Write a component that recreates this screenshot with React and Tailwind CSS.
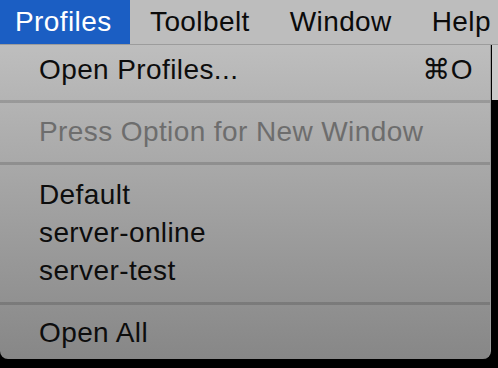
const MENUS = ['Toolbelt', 'Window', 'Help']

function Item({ label, shortcut, disabled }) {
  return (
    <div className={`flex items-center h-[38px] leading-[38px] pl-[39px] pr-[17px] ${disabled ? 'text-[#6d6d6d]' : 'text-[#0d0d0d]'}`}>
      <span>{label}</span>
      {shortcut && <span className="ml-auto">{shortcut}</span>}
    </div>
  )
}

export default function App() {
  return (
    <div className="w-[498px] h-[368px] bg-black overflow-hidden font-['Liberation_Sans','DejaVu_Sans',sans-serif] text-[28px] tracking-[0.4px]">
      {/* menu bar */}
      <div className="flex h-[45px] bg-[#bdbdbd] border-b border-[#9c9c9c] leading-[44px] text-[#0b0b0b]">
        <div className="w-[130px] pl-[15px] bg-[#1b5ec3] text-white">Profiles</div>
        <div className="flex gap-[40px] pl-[20px]">
          {MENUS.map(m => <span key={m}>{m}</span>)}
        </div>
      </div>

      <div className="flex">
        {/* dropdown */}
        <div className="w-[491px] h-[314px] pt-[6px] pb-[7px] rounded-b-[8px] bg-gradient-to-b from-[#bebebe] to-[#878787] border-r border-[#9a9a9a]">
          <Item label="Open Profiles..." shortcut="⌘O" />
          <div className="mt-[11px] mb-[10px] h-[3px] bg-black/15" />
          <Item label="Press Option for New Window" disabled />
          <div className="mt-[11px] mb-[11px] h-[3px] bg-black/15" />
          <Item label="Default" />
          <Item label="server-online" />
          <Item label="server-test" />
          <div className="mt-[12px] mb-[9px] h-[3px] bg-black/15" />
          <Item label="Open All" />
        </div>
        <div className="flex-1 border-l border-black">
          <div className="h-[55px] bg-[#c9c9c9]" />
        </div>
      </div>
    </div>
  )
}
